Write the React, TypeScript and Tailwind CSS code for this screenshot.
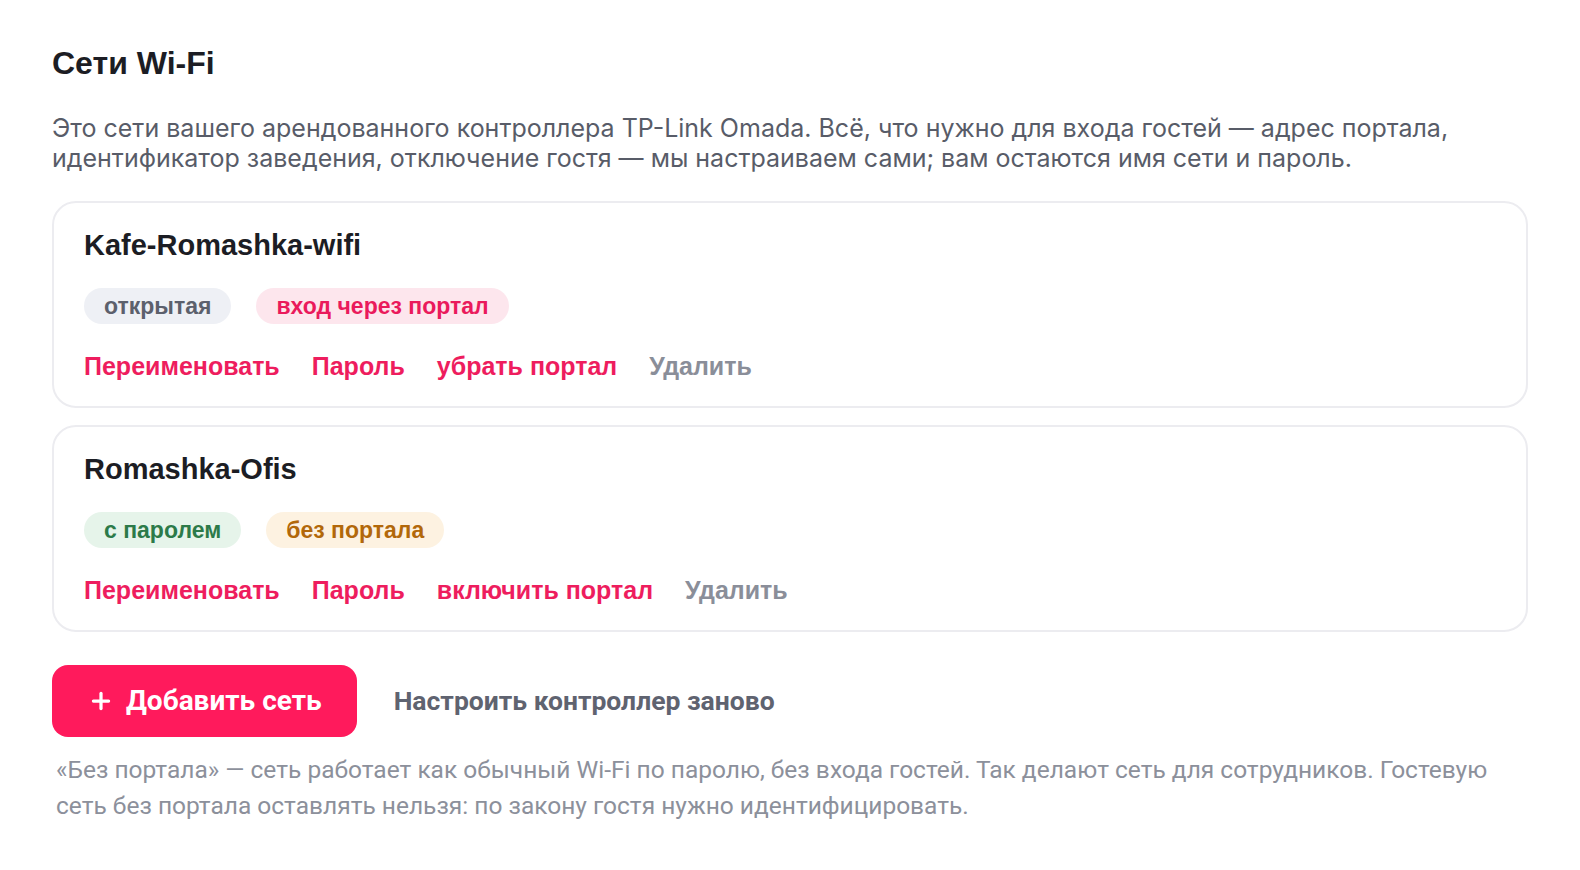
import { Plus } from "lucide-react";

type Badge = { label: string; tone: "gray" | "pink" | "green" | "amber" };

const toneClass: Record<Badge["tone"], string> = {
  gray: "bg-[#eef0f5] text-[#5c606c]",
  pink: "bg-[#fde6ed] text-[#ea1a5c]",
  green: "bg-[#e6f4ea] text-[#2c7a49]",
  amber: "bg-[#fdf2e1] text-[#b2680a]",
};

const networks: { name: string; badges: Badge[]; portalAction: string }[] = [
  {
    name: "Kafe-Romashka-wifi",
    badges: [
      { label: "открытая", tone: "gray" },
      { label: "вход через портал", tone: "pink" },
    ],
    portalAction: "убрать портал",
  },
  {
    name: "Romashka-Ofis",
    badges: [
      { label: "с паролем", tone: "green" },
      { label: "без портала", tone: "amber" },
    ],
    portalAction: "включить портал",
  },
];

function NetworkCard({ name, badges, portalAction }: (typeof networks)[number]) {
  return (
    <div className="rounded-[24px] border-2 border-[#ececf0] bg-white px-[30px] pt-[25px] pb-[24px]">
      <h3 className="text-[29px] font-bold leading-[34px] text-[#1c1d24]">{name}</h3>
      <div className="mt-[26px] flex gap-[25px]">
        {badges.map((b) => (
          <span
            key={b.label}
            className={`rounded-full px-[20px] h-[36px] flex items-center text-[23px] font-bold ${toneClass[b.tone]}`}
          >
            {b.label}
          </span>
        ))}
      </div>
      <div className="mt-[26px] flex gap-[32px] text-[25px] font-bold leading-[32px]">
        <button className="text-[#ee1d5e]">Переименовать</button>
        <button className="text-[#ee1d5e]">Пароль</button>
        <button className="text-[#ee1d5e]">{portalAction}</button>
        <button className="text-[#8a8e99]">Удалить</button>
      </div>
    </div>
  );
}

export default function App() {
  return (
    <div className="min-h-screen bg-white pl-[52px] pr-[52px] pt-[45px] font-['Liberation_Sans',Arial,sans-serif]">
      <h2 className="text-[32px] font-bold leading-[36px] text-[#1c1d24]">Сети Wi-Fi</h2>
      <p className="mt-[32px] font-['Inter',sans-serif] text-[25px] leading-[30px] text-[#585c68]">
        Это сети вашего арендованного контроллера TP-Link Omada. Всё, что нужно для входа гостей — адрес портала,
        идентификатор заведения, отключение гостя — мы настраиваем сами; вам остаются имя сети и пароль.
      </p>
      <div className="mt-[28px] flex flex-col gap-[17px]">
        {networks.map((n) => (
          <NetworkCard key={n.name} {...n} />
        ))}
      </div>
      <div className="mt-[33px] flex items-center gap-[37px]">
        <button className="flex h-[72px] items-center gap-[12px] rounded-[16px] bg-[#ff1a5c] pl-[36px] pr-[35px] font-['Roboto',sans-serif] text-[28px] font-bold text-white">
          <Plus className="h-[26px] w-[26px]" strokeWidth={3} />
          Добавить сеть
        </button>
        <button className="font-['Roboto',sans-serif] text-[26.5px] font-bold text-[#5f6370]">Настроить контроллер заново</button>
      </div>
      <p className="mt-[15px] pl-[4px] font-['Roboto',sans-serif] text-[24.5px] leading-[36px] text-[#8c909b]">
        «Без портала» — сеть работает как обычный Wi-Fi по паролю, без входа гостей. Так делают сеть для сотрудников. Гостевую
        сеть без портала оставлять нельзя: по закону гостя нужно идентифицировать.
      </p>
    </div>
  );
}
